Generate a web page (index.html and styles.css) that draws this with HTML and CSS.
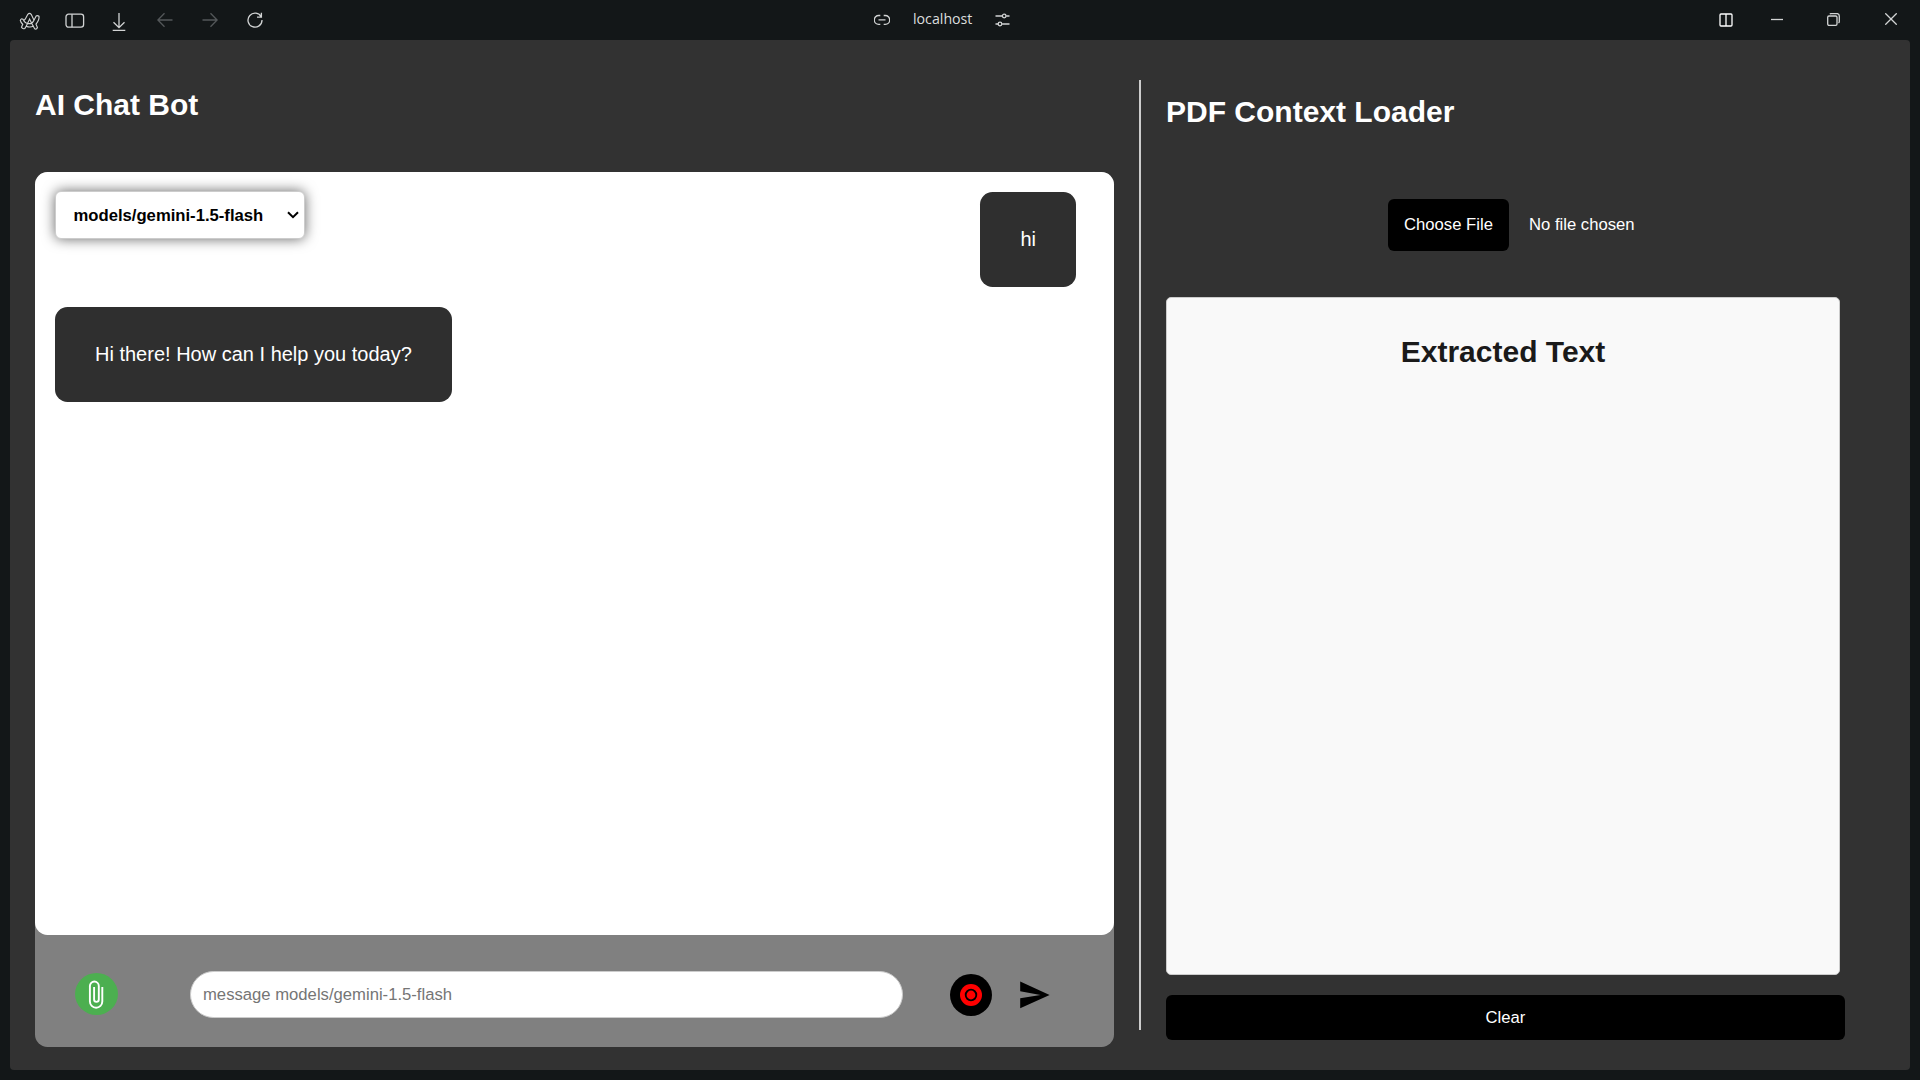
FILE: index.html
```html
<!DOCTYPE html>
<html lang="en">
<head>
<meta charset="utf-8">
<title>AI Chat Bot</title>
<link rel="stylesheet" href="styles.css">
</head>
<body>
<header class="titlebar">
  <nav class="nav-icons">
    <svg class="icon" width="22" height="20" viewBox="0 0 22 20"><path d="M6.200 7.200L8.800 2.300Q10.500.4 12.200 2.300L15 8.200L17 4.200Q18.200 2.800 20 4.300Q20.600 7.500 17 12.200L18.400 15.500Q17.500 17.800 15.600 16.700L14.300 14.300Q10.800 15.800 7.200 14.200L5.800 16.500Q3.500 17.300 2.500 15.300L3.700 12.300Q1.700 10.500 1.300 8.400Q2 6.200 4 7.200Q5 9.500 6.800 10.800L8.800 11.600M6.200 7.200L4.800 8.500M12.600 11.300L10.600 7L7.200 14.200M15 8.200Q14 10.500 11.800 11.600L8.800 11.600M12.600 11.300L14.300 14.300"/></svg>
    <svg class="icon" width="20" height="16" viewBox="0 0 20 16"><rect x="1" y="1.2" width="17.6" height="13" rx="2.6"/><path d="M7 1.2v13"/></svg>
    <svg class="icon" width="14" height="20" viewBox="0 0 14 20"><path d="M7 1v14.500M1.500 10.200L7 15.700l5.500-5.500M.7 18.300h12.600"/></svg>
    <svg class="icon icon-dim" width="16" height="16" viewBox="0 0 16 16"><path d="M15.500 8H1M7.500 1.300L.9 8l6.600 6.700"/></svg>
    <svg class="icon icon-dim" width="16" height="16" viewBox="0 0 16 16"><path d="M.5 8H15M8.500 1.300L15.100 8l-6.600 6.700"/></svg>
    <svg class="icon" width="16" height="16" viewBox="0 0 16 16"><path d="M14.300 5.100A7 7 0 1 0 15 8M14.400.8v4.400H10"/></svg>
  </nav>
  <div class="address">
    <svg class="icon" width="16" height="12" viewBox="0 0 16 12"><path d="M6.300 1.500H4.700a4.300 4.300 0 0 0 0 8.800h1.600M9.700 1.500h1.600a4.300 4.300 0 0 1 0 8.800H9.700M4.500 5.900h7"/></svg>
    <span class="host">localhost</span>
    <svg class="icon" width="15" height="14" viewBox="0 0 15 14"><path d="M.5 3h6.700M11.200 3h3.300M.5 11h2.600M7.100 11h7.400"/><circle cx="9.200" cy="3" r="1.800"/><circle cx="5" cy="11" r="1.800"/></svg>
  </div>
  <div class="window-icons">
    <svg class="icon icon-bright" width="14" height="14" viewBox="0 0 14 14"><rect x="1" y="1" width="12" height="12" rx="1"/><path d="M7 1v12"/></svg>
    <svg class="icon" width="12" height="12" viewBox="0 0 12 12"><path d="M0 6.500h12"/></svg>
    <svg class="icon" width="13" height="13" viewBox="0 0 13 13"><rect x=".7" y="3" width="9.300" height="9.300" rx="1.300"/><path d="M3 1.200Q3.300.6 4.300.6H10Q12.300.6 12.300 3v5.500q0 1-.8 1.500"/></svg>
    <svg class="icon" width="12" height="12" viewBox="0 0 12 12"><path d="M.3.3l11.400 11.400M11.700.3L.3 11.700"/></svg>
  </div>
</header>
<main class="page">
  <section class="chat">
    <h2 class="title">AI Chat Bot</h2>
    <div class="chat-frame">
      <div class="messages">
        <div class="top-row">
          <button class="model-select">models/gemini-1.5-flash
            <svg width="12" height="8" viewBox="0 0 12 8"><path d="M1 1.200l5 5 5-5" fill="none" stroke="#000" stroke-width="2"/></svg>
          </button>
          <div class="bubble bubble-user">hi</div>
        </div>
        <div class="bubble">Hi there! How can I help you today?</div>
      </div>
      <form class="composer">
        <button type="button" class="attach" aria-label="Attach">
          <svg width="16" height="29" viewBox="0 0 16 29"><path d="M14.300 7v14.500a6.200 6.200 0 0 1-12.400 0V6a4.450 4.450 0 0 1 8.900 0v13.500a2.350 2.350 0 0 1-4.700 0V7" fill="none" stroke="#fff" stroke-width="1.900"/></svg>
        </button>
        <input class="prompt" type="text" placeholder="message models/gemini-1.5-flash">
        <button type="button" class="record" aria-label="Record">
          <svg width="22" height="22" viewBox="0 0 22 22"><circle cx="11" cy="11" r="11" fill="red"/><circle cx="11" cy="11" r="5.300" fill="red" stroke="#000" stroke-width="1.800"/></svg>
        </button>
        <button type="button" class="send" aria-label="Send">
          <svg width="30" height="28" viewBox="0 0 30 28"><path d="M.2.600V10.300L20.500 13.900.2 17.200v10L29.600 14z"/></svg>
        </button>
      </form>
    </div>
  </section>
  <div class="divider"></div>
  <section class="loader">
    <h2 class="title">PDF Context Loader</h2>
    <div class="file-row">
      <button class="file-button">Choose File</button>
      <span class="file-name">No file chosen</span>
    </div>
    <div class="extracted"><h2 class="extracted-title">Extracted Text</h2></div>
    <button class="clear">Clear</button>
  </section>
</main>
</body>
</html>
```
FILE: styles.css
```css
* { box-sizing: border-box; }

body {
  margin: 0;
  height: 1080px;
  padding: 0 10px 10px;
  display: flex;
  flex-direction: column;
  overflow: hidden;
  background: #131718;
  font-family: "Liberation Sans", Arial, sans-serif;
}

button {
  border: 0;
  padding: 0;
  font: 16.67px/19px "Liberation Sans", Arial, sans-serif;
}

svg { display: block; flex: none; }

.titlebar {
  flex: none;
  height: 40px;
  display: grid;
  grid-template-columns: 1fr auto 1fr;
}

.icon {
  fill: none;
  stroke: #d2d4d4;
  stroke-width: 1.3;
}

.icon-dim { stroke: #54585a; }
.icon-bright { stroke: #fff; }

.nav-icons {
  display: flex;
  align-items: center;
  padding: 2px 0 0 9px;
}

.nav-icons .icon:nth-child(1) { margin-top: 1px; stroke-width: 1.15; }
.nav-icons .icon:nth-child(2) { margin-left: 24px; }
.nav-icons .icon:nth-child(3) { margin-left: 27px; margin-top: 2px; }
.nav-icons .icon:nth-child(4) { margin: -2px 0 0 31px; }
.nav-icons .icon:nth-child(5) { margin: -2px 0 0 29px; }
.nav-icons .icon:nth-child(6) { margin: -2px 0 0 29px; }

.address {
  display: flex;
  align-items: center;
  margin-left: -36px;
}

.host {
  width: 60px;
  margin: -2px 22px 0 23px;
  color: #dcdede;
  font: 14.2px/20px "Segoe UI", "Open Sans", sans-serif;
  white-space: nowrap;
}

.window-icons {
  display: flex;
  align-items: center;
  justify-content: flex-end;
  padding: 0 13px 2px 0;
}

.window-icons .icon { margin-left: 45px; }
.window-icons .icon:nth-child(1) { margin: 2px -7px 0 0; }
.window-icons .icon:nth-child(3) { margin-left: 44px; }

.page {
  flex: 1;
  min-height: 0;
  display: flex;
  padding: 40px 65px 23px 25px;
  border-radius: 4px;
  background: #323232;
}

.title {
  margin: 0;
  color: #fff;
  font-size: 30px;
  line-height: 34px;
}

.chat {
  width: 1079px;
  padding-top: 8px;
  display: flex;
  flex-direction: column;
}

.chat-frame {
  flex: 1;
  margin-top: 50px;
  display: flex;
  flex-direction: column;
  border-radius: 12.5px;
  background: #808080;
}

.messages {
  height: 763px;
  padding: 20px;
  border-radius: 12.5px;
  background: #fff;
}

.top-row {
  display: flex;
  justify-content: space-between;
  align-items: flex-start;
  margin-bottom: 20px;
  padding-right: 18px;
}

.model-select {
  width: 250px;
  height: 48px;
  margin-top: -1px;
  padding: 0 5px 0 17.5px;
  display: flex;
  align-items: center;
  justify-content: space-between;
  border: 1px solid #ccc;
  border-radius: 6px;
  background: #fff;
  box-shadow: 0 0 12.5px rgba(0, 0, 0, .6);
  color: #000;
  font-weight: bold;
}

.bubble {
  width: fit-content;
  height: 95px;
  padding: 36px 40px;
  border-radius: 12.5px;
  background: #2f2f2f;
  color: #fff;
  font-size: 20px;
  line-height: 23px;
}

.composer {
  flex: 1;
  display: flex;
  align-items: center;
  padding: 6px 0 0 40px;
}

.attach {
  width: 43px;
  height: 42px;
  padding-right: 1px;
  display: grid;
  place-items: center;
  border-radius: 50%;
  background: #4caf50;
}

.prompt {
  width: 713px;
  height: 47px;
  margin: 0 47px 0 72px;
  padding: 1px 12px 0;
  border: 1px solid #ccc;
  border-radius: 25px;
  font: 16.67px/19px "Liberation Sans", Arial, sans-serif;
}

.prompt::placeholder { color: #757575; }

.record {
  width: 42px;
  height: 42px;
  margin-top: 1px;
  display: grid;
  place-items: center;
  border-radius: 50%;
  background: #000;
}

.send {
  margin: 1px 0 0 28px;
  background: none;
}

.divider {
  width: 2px;
  height: 950px;
  margin: 0 25px;
  background: #ccc;
}

.loader {
  width: 679px;
  padding-top: 15px;
}

.file-row {
  margin: 70px 0 46px;
  padding-left: 222px;
  display: flex;
}

.file-button {
  width: 121px;
  height: 52px;
  margin-right: 20px;
  padding-bottom: 2px;
  border-radius: 6px;
  background: #000;
  color: #fff;
}

.file-name {
  color: #fff;
  font-size: 16.67px;
  line-height: 51px;
}

.extracted {
  width: 674px;
  height: 678px;
  padding-top: 37px;
  border: 1px solid #ccc;
  border-radius: 5px;
  background: #f9f9f9;
}

.extracted-title {
  margin: 0;
  color: #1a1a1a;
  font-size: 30px;
  line-height: 34px;
  text-align: center;
}

.clear {
  width: 679px;
  height: 45px;
  margin-top: 20px;
  border-radius: 6px;
  background: #000;
  color: #fff;
}
```
